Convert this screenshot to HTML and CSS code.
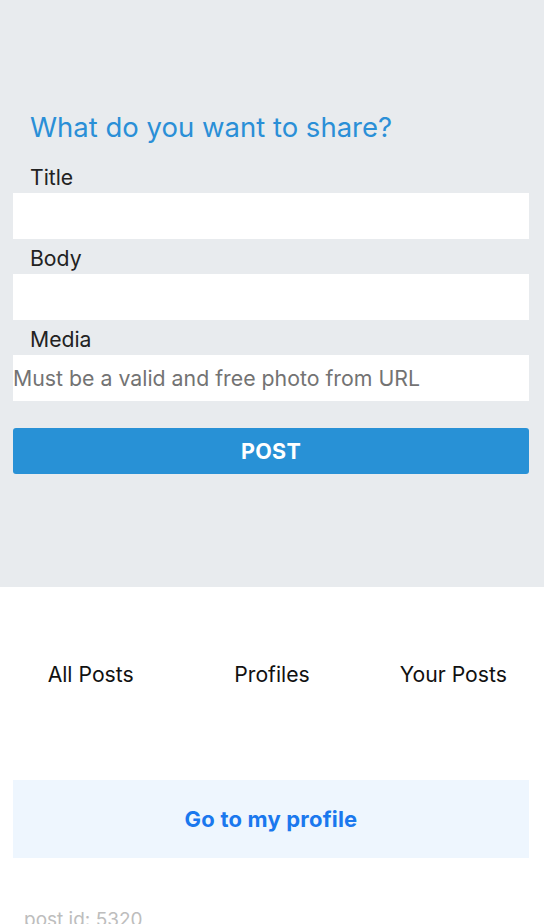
FILE: index.html
```html
<!DOCTYPE html>
<html lang="en">
<head>
<meta charset="utf-8">
<title>Share</title>
<link rel="stylesheet" href="styles.css">
</head>
<body>
<div class="compose">
  <h1 class="heading">What do you want to share?</h1>
  <div class="field">
    <label class="label">Title</label>
    <input class="input" type="text">
  </div>
  <div class="field">
    <label class="label">Body</label>
    <input class="input" type="text">
  </div>
  <div class="field">
    <label class="label">Media</label>
    <input class="input" type="text" placeholder="Must be a valid and free photo from URL">
  </div>
  <button class="post-btn">POST</button>
</div>
<nav class="tabs">
  <div class="tab">All Posts</div>
  <div class="tab">Profiles</div>
  <div class="tab">Your Posts</div>
</nav>
<button class="profile-btn">Go to my profile</button>
<div class="post-id">post id: 5320</div>
</body>
</html>
```

FILE: styles.css
```css
* { box-sizing: border-box; }
html, body { margin: 0; padding: 0; }
body {
  width: 544px;
  height: 924px;
  overflow: hidden;
  background: #ffffff;
  font-family: Inter, "Noto Sans", "Liberation Sans", sans-serif;
}
.compose {
  background: #e8ebee;
  height: 587px;
  padding: 111px 15px 0 13px;
  display: flex;
  flex-direction: column;
}
.heading {
  margin: 0 0 23px 17px;
  font-size: 27.5px;
  line-height: 33px;
  font-weight: 400;
  color: #2a8fd7;
}
.field {
  display: flex;
  flex-direction: column;
  margin-bottom: 9px;
}
.label {
  font-size: 21.2px;
  line-height: 21px;
  color: #222222;
  padding-left: 17px;
  margin-bottom: 5px;
}
.input {
  height: 46px;
  border: none;
  background: #ffffff;
  padding: 0;
  margin: 0;
  font-family: inherit;
  font-size: 21.3px;
  color: #333;
  outline: none;
}
.input::placeholder { color: #737373; }
.post-btn {
  margin-top: 18px;
  height: 46px;
  border: none;
  border-radius: 3px;
  background: #2891d6;
  color: #ffffff;
  font-family: inherit;
  font-size: 21.5px;
  font-weight: 700;
  letter-spacing: 0.3px;
}
.tabs {
  height: 173px;
  display: grid;
  grid-template-columns: 1fr 1fr 1fr;
  align-items: center;
  justify-items: center;
}
.tab {
  font-size: 21.2px;
  color: #111111;
}
.profile-btn {
  display: block;
  margin: 20px 15px 0 13px;
  width: 516px;
  height: 78px;
  border: none;
  background: #eef6fe;
  color: #1a78ee;
  font-family: inherit;
  font-size: 22px;
  font-weight: 700;
  letter-spacing: 0.2px;
}
.post-id {
  margin: 50px 0 0 24px;
  font-size: 19px;
  line-height: 24px;
  color: #bdbdbd;
}
```
